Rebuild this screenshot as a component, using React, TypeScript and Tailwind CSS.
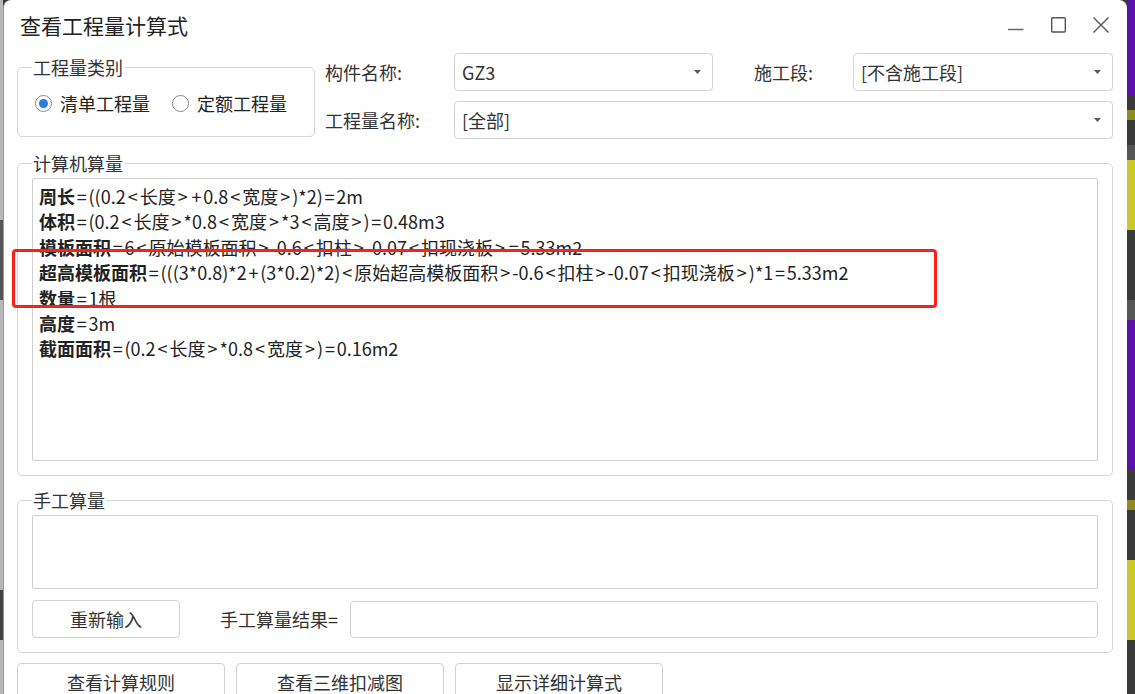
import React from "react";

const lines: { label: string; rest: string }[] = [
  { label: "周长", rest: "=((0.2<长度>+0.8<宽度>)*2)=2m" },
  { label: "体积", rest: "=(0.2<长度>*0.8<宽度>*3<高度>)=0.48m3" },
  { label: "模板面积", rest: "=6<原始模板面积>-0.6<扣柱>-0.07<扣现浇板>=5.33m2" },
  {
    label: "超高模板面积",
    rest: "=(((3*0.8)*2+(3*0.2)*2)<原始超高模板面积>-0.6<扣柱>-0.07<扣现浇板>)*1=5.33m2",
  },
  { label: "数量", rest: "=1根" },
  { label: "高度", rest: "=3m" },
  { label: "截面面积", rest: "=(0.2<长度>*0.8<宽度>)=0.16m2" },
];

// YaHei draws < > = + wider than Noto, so pad them a bit
const Formula = ({ text }: { text: string }) => (
  <>
    {text.split("").map((ch, i) => {
      if (ch === "<" || ch === ">") return <span key={i} className="px-[2px]">{ch}</span>;
      if (ch === "=" || ch === "+") return <span key={i} className="px-[1.75px]">{ch}</span>;
      return ch;
    })}
  </>
);

const Arrow = () => (
  <svg width="9" height="6" viewBox="0 0 9 6" className="shrink-0">
    <path d="M1 1h7L4.5 5z" fill="#5a5a5a" />
  </svg>
);

const Combo = ({ value, className }: { value: string; className: string }) => (
  <div
    className={`h-[38px] flex items-center justify-between pl-[7px] pr-[10px] border border-[#d2d2d2] rounded-[4px] bg-white text-[18px] text-[#333] ${className}`}
  >
    <span>{value}</span>
    <Arrow />
  </div>
);

const Radio = ({ checked, label }: { checked?: boolean; label: string }) => (
  <label className="flex items-center gap-[8px]">
    <span className="w-[17px] h-[17px] rounded-full border border-[#8a8a8a] flex items-center justify-center bg-white">
      {checked && <span className="w-[9px] h-[9px] rounded-full bg-[#2a7de1]" />}
    </span>
    <span className="text-[18px] text-[#222]">{label}</span>
  </label>
);

const Btn = ({ text, className }: { text: string; className: string }) => (
  <button
    className={`h-[38px] border border-[#d2d2d2] rounded-[4px] bg-white text-[18px] text-[#333] ${className}`}
  >
    {text}
  </button>
);

const stripe: { h: string; c: string }[] = [
  { h: "h-[95px]", c: "bg-[#5a12a6]" },
  { h: "h-[15px]", c: "bg-[#3a3a3a]" },
  { h: "h-[10px]", c: "bg-[#8c8c22]" },
  { h: "h-[25px]", c: "bg-[#3a3a3a]" },
  { h: "h-[15px]", c: "bg-[#555555]" },
  { h: "h-[70px]", c: "bg-[#c9c92c]" },
  { h: "h-[70px]", c: "bg-[#3a3a3a]" },
  { h: "h-[20px]", c: "bg-[#555555]" },
  { h: "h-[150px]", c: "bg-[#5a12a6]" },
  { h: "h-[30px]", c: "bg-[#3a3a3a]" },
  { h: "h-[10px]", c: "bg-[#8c8c22]" },
  { h: "h-[50px]", c: "bg-[#3a3a3a]" },
  { h: "h-[80px]", c: "bg-[#c9c92c]" },
  { h: "h-[54px]", c: "bg-[#3a3a3a]" },
];

export default function App() {
  return (
    <div className="w-[1135px] h-[694px] flex overflow-hidden bg-[#3a3a3a] font-['Noto_Sans_CJK_SC',sans-serif]">
      <div className="w-[3px] shrink-0 flex flex-col bg-[#b8b8b8]">
        <div className="h-[220px]" />
        <div className="h-[80px] bg-[#555]" />
        <div className="h-[290px]" />
        <div className="h-[50px] bg-[#444]" />
      </div>

      <div className="relative w-[1124px] shrink-0 h-[694px] bg-white rounded-t-[8px] border-l border-[#9a9a9a] overflow-hidden px-[13px]">
        {/* title bar */}
        <div className="h-[53px] flex items-start justify-between">
          <div className="pt-[10px] pl-[3px] text-[21px] text-[#222] leading-[30px]">查看工程量计算式</div>
          <div className="flex items-start pt-[17px] pr-[5px]">
            <svg width="16" height="16" viewBox="0 0 16 16">
              <path d="M0 12.5h15.5" stroke="#666" strokeWidth="1.4" />
            </svg>
            <svg width="16" height="16" viewBox="0 0 16 16" className="ml-[27px]">
              <rect x="0.7" y="0.7" width="13.6" height="14.3" fill="none" stroke="#555" strokeWidth="1.4" rx="1" />
            </svg>
            <svg width="16" height="16" viewBox="0 0 16 16" className="ml-[26px]">
              <path d="M0.5 0.5l15 15M15.5 0.5l-15 15" stroke="#555" strokeWidth="1.4" />
            </svg>
          </div>
        </div>

        {/* top section */}
        <div className="flex items-start">
          <fieldset className="mt-[2px] w-[298px] h-[82px] border border-[#d6d6d6] rounded-[5px] px-[14px]">
            <legend className="px-[1px] text-[18px] text-[#333] leading-[24px]">工程量类别</legend>
            <div className="flex items-center gap-[22px] pl-[3px] pt-[11px]">
              <Radio checked label="清单工程量" />
              <Radio label="定额工程量" />
            </div>
          </fieldset>

          <div className="ml-[10px] flex flex-col gap-[10px]">
            <div className="flex items-center">
              <span className="w-[129px] text-[18px] text-[#333]">构件名称:</span>
              <Combo value="GZ3" className="w-[259px]" />
              <span className="ml-[41px] w-[99px] text-[18px] text-[#333]">施工段:</span>
              <Combo value="[不含施工段]" className="w-[260px]" />
            </div>
            <div className="flex items-center">
              <span className="w-[129px] text-[18px] text-[#333]">工程量名称:</span>
              <Combo value="[全部]" className="w-[659px]" />
            </div>
          </div>
        </div>

        {/* computed */}
        <fieldset className="mt-[12px] w-[1096px] border border-[#d6d6d6] rounded-[5px] px-[14px] pt-[3px] pb-[14px]">
          <legend className="px-[1px] text-[18px] text-[#333] leading-[24px]">计算机算量</legend>
          <div className="h-[283px] border border-[#cfcfcf] rounded-[2px] pl-[6px] pt-[5px] text-[18px] leading-[25.4px] text-[#222]">
            {lines.map((l) => (
              <div key={l.label} className="whitespace-nowrap">
                <b className="font-bold">{l.label}</b>
                <Formula text={l.rest} />
              </div>
            ))}
          </div>
        </fieldset>

        {/* manual */}
        <fieldset className="mt-[12px] w-[1096px] border border-[#d6d6d6] rounded-[5px] px-[14px] pt-[3px] pb-[14px]">
          <legend className="px-[1px] text-[18px] text-[#333] leading-[24px]">手工算量</legend>
          <div className="h-[74px] border border-[#cfcfcf] rounded-[2px]" />
          <div className="mt-[11px] flex items-center">
            <Btn text="重新输入" className="w-[148px] h-[37px]" />
            <span className="ml-[40px] w-[130px] text-[18px] text-[#333] whitespace-nowrap">手工算量结果=</span>
            <div className="w-[748px] h-[37px] border border-[#d2d2d2] rounded-[4px]" />
          </div>
        </fieldset>

        {/* bottom buttons */}
        <div className="mt-[10px] flex gap-[11px]">
          <Btn text="查看计算规则" className="w-[208px]" />
          <Btn text="查看三维扣减图" className="w-[208px]" />
          <Btn text="显示详细计算式" className="w-[208px]" />
        </div>

        {/* highlight */}
        <div className="absolute left-[8px] top-[249px] w-[925px] h-[59px] border-[3px] border-[#fe2018] rounded-[4px] pointer-events-none" />
      </div>

      <div className="w-[8px] shrink-0 flex flex-col">
        {stripe.map((s, i) => (
          <div key={i} className={`${s.h} ${s.c}`} />
        ))}
      </div>
    </div>
  );
}
